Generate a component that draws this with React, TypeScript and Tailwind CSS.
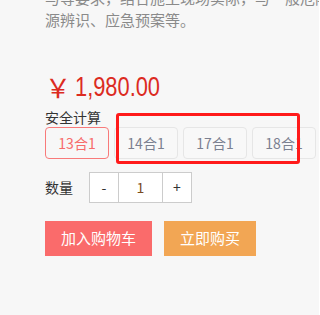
import React from "react";

export default function App() {
  const cjk = { fontFamily: '"Noto Sans CJK SC", "Noto Sans", sans-serif' };
  const price = { fontFamily: '"Liberation Sans", "Noto Sans CJK SC", sans-serif' };
  const options = ["14合1", "17合1", "18合1"];
  return (
    <div className="relative w-[319px] h-[315px] overflow-hidden bg-[#f7f7f7] pl-[45px]" style={cjk}>
      <div className="-mt-[13px] text-[15px] leading-[22px] text-[#8a8a8a] whitespace-nowrap">
        <div>与等要求，结合施工现场实际，与一般危险</div>
        <div>源辨识、应急预案等。</div>
      </div>

      <div className="mt-[38px] h-[36px] flex items-center text-[26px] leading-[36px] text-[#dc2b1f]" style={price}>
        <span style={cjk}>￥</span>
        <span className="ml-[4px] inline-block origin-left scale-x-[0.78] text-[28px]">1,980.00</span>
      </div>

      <div className="mt-[2px] text-[14px] leading-[20px] text-[#333]">安全计算</div>

      <div className="flex gap-[5px] whitespace-nowrap">
        <div className="shrink-0 w-[64px] h-[32px] flex items-center justify-center rounded-[4px] border border-[#f87a7a] text-[14px] text-[#f76b6b]">
          13合1
        </div>
        {options.map((o) => (
          <div
            key={o}
            className="shrink-0 w-[64px] h-[32px] flex items-center justify-center rounded-[4px] border border-[#e6e6e6] bg-[#f8f8f8] text-[14px] text-[#7b8090]"
          >
            {o}
          </div>
        ))}
      </div>

      <div className="mt-[13px] flex items-center">
        <span className="text-[14px] text-[#333] w-[44px]">数量</span>
        <div className="flex h-[31px] border border-[#cccccc] bg-white text-[14px]">
          <div className="w-[29px] flex items-center justify-center text-[#333] border-r border-[#cccccc]">-</div>
          <div className="w-[44px] flex items-center justify-center text-[#7a4b1e] border-r border-[#cccccc]">1</div>
          <div className="w-[28px] flex items-center justify-center text-[#333]">+</div>
        </div>
      </div>

      <div className="mt-[18px] flex gap-[12px]">
        <button className="h-[35px] px-4 bg-[#fa6b6b] text-white text-[15px]">加入购物车</button>
        <button className="h-[35px] px-4 bg-[#f2a654] text-white text-[15px]">立即购买</button>
      </div>

      <div className="absolute left-[116px] top-[113px] w-[184px] h-[51px] border-[3px] border-[#ff1a1a] rounded-[3px]" />
    </div>
  );
}
